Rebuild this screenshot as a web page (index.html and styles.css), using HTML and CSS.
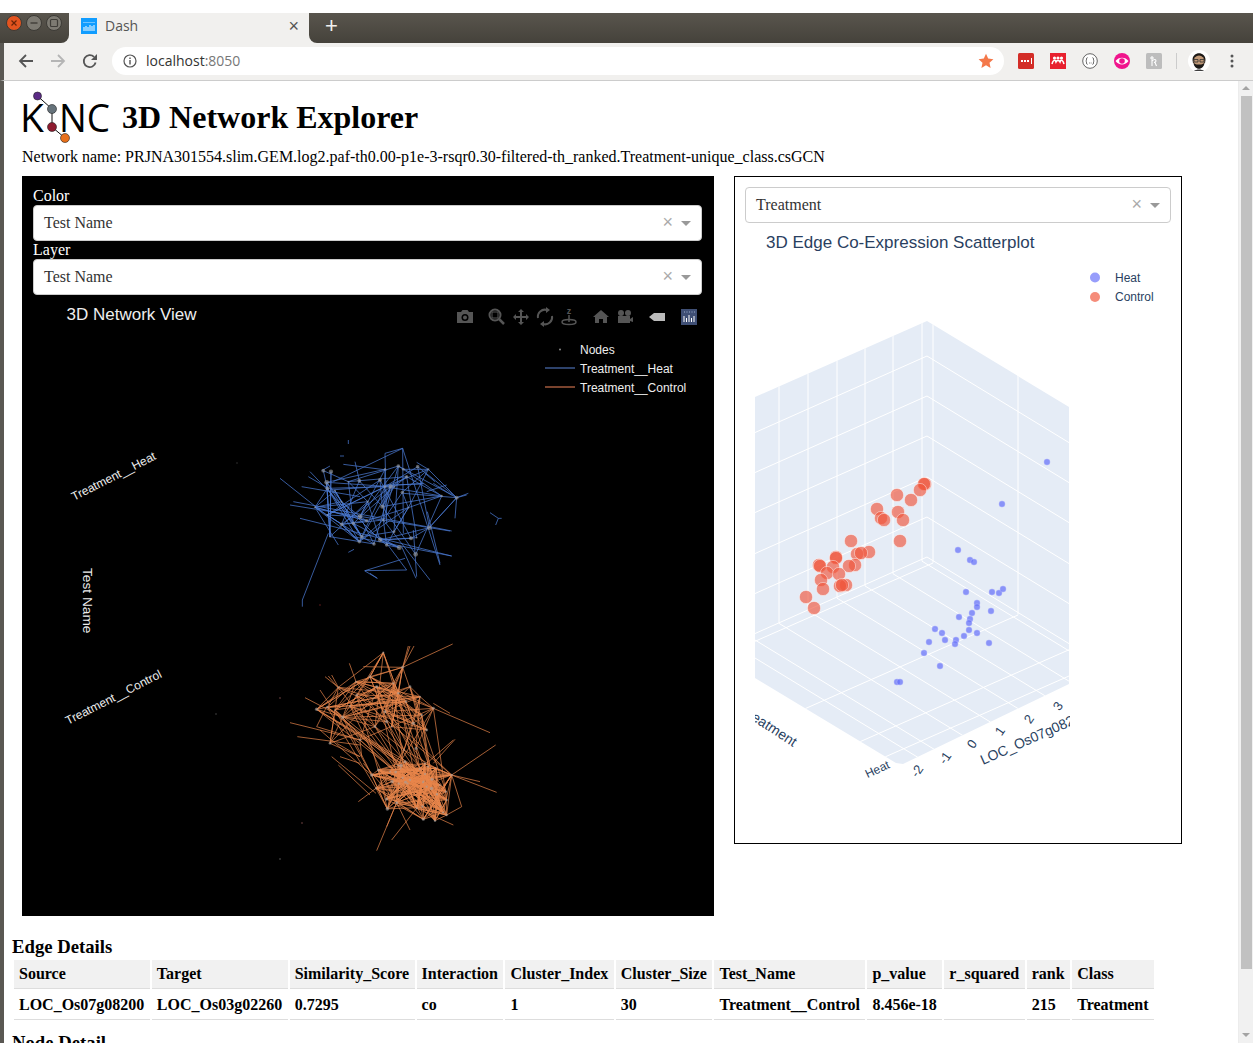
FILE: index.html
```html
<!DOCTYPE html>
<html lang="en">
<head>
<meta charset="utf-8">
<title>Dash</title>
<link rel="stylesheet" href="styles.css">
</head>
<body>
<div class="window">
  <div class="tabstrip">
    <div class="winbtns">
      <svg class="winsvg" viewBox="0 0 69 30" width="69" height="30">
        <circle cx="14" cy="10" r="7.5" fill="#e4541f" stroke="#3c3a35"/>
        <path d="M11.5 7.5l5 5M16.5 7.5l-5 5" stroke="#6b2408" stroke-width="1.2"/>
        <circle cx="34" cy="10" r="7.5" fill="#7d7a72" stroke="#3c3a35"/>
        <path d="M30.5 10h7" stroke="#3f3d38" stroke-width="1.4"/>
        <circle cx="54" cy="10" r="7.5" fill="#7d7a72" stroke="#3c3a35"/>
        <rect x="50.5" y="6.5" width="7" height="7" rx="1" fill="none" stroke="#3f3d38" stroke-width="1.2"/>
      </svg>
    </div>
    <div class="tab">
      <svg class="favicon" viewBox="0 0 16 16" width="16" height="16">
        <rect width="16" height="16" fill="#119dff"/>
        <path d="M3 9v4M5 8v5M7 9v4M9 7v6M11 8v5M13 7v6" stroke="#fff" stroke-width="1"/>
        <path d="M3 4v1M5 4v1M7 4v1M9 4v1M11 4v1M13 4v1" stroke="#cfeaff" stroke-width="1"/>
      </svg>
      <span class="tabtitle">Dash</span>
      <span class="tabclose">×</span>
    </div>
    <div class="stripfill"><span class="newtab">+</span></div>
  </div>
  <div class="toolbar">
    <svg class="navicon" viewBox="0 0 16 16" width="16" height="16"><path d="M15 8H2.5M8 2L2 8l6 6" fill="none" stroke="#555" stroke-width="1.8"/></svg>
    <svg class="navicon" viewBox="0 0 16 16" width="16" height="16"><path d="M1 8h12.5M8 2l6 6-6 6" fill="none" stroke="#b5b5b5" stroke-width="1.8"/></svg>
    <svg class="navicon" viewBox="0 0 16 16" width="16" height="16"><path d="M13.6 9.5A6 6 0 1 1 12 3.8" fill="none" stroke="#555" stroke-width="1.8"/><path d="M15 1v6H9z" fill="#555"/></svg>
    <div class="omnibox">
      <svg class="infoicon" viewBox="0 0 14 14" width="14" height="14"><circle cx="7" cy="7" r="6" fill="none" stroke="#555" stroke-width="1.2"/><path d="M7 6v4.5M7 3.6v1.4" stroke="#555" stroke-width="1.4"/></svg>
      <span class="url"><span class="host">localhost</span>:8050</span>
      <svg class="star" viewBox="0 0 16 16" width="16" height="16"><path d="M8 .8l2.2 4.8 5.2.6-3.9 3.5 1.1 5.2L8 12.2l-4.6 2.7 1.1-5.2L.6 6.2l5.2-.6z" fill="#f4784a"/></svg>
    </div>
    <div class="exts">
      <svg viewBox="0 0 16 16" width="16" height="16"><rect width="16" height="16" rx="1.5" fill="#d32d27"/><path d="M3 7h2v2H3zM6 7h2v2H6zM9 7h2v2H9zM13 5h1v6h-1z" fill="#fff"/></svg>
      <svg viewBox="0 0 16 16" width="16" height="16"><rect width="16" height="16" fill="#e8202e"/><circle cx="4.5" cy="5" r="1.6" fill="#fff"/><circle cx="8" cy="5" r="1.6" fill="#fff"/><circle cx="11.5" cy="5" r="1.6" fill="#fff"/><path d="M2 11c1-4 3-5 4-2 1-2 3-2 4 0 1-3 3-2 4 2" fill="none" stroke="#fff" stroke-width="1.6"/></svg>
      <svg viewBox="0 0 16 16" width="16" height="16"><circle cx="8" cy="8" r="7.3" fill="#fff" stroke="#555" stroke-width=".9"/><path d="M5.5 4.5c-1.5 0-.5 3-1.6 3.5 1.1.5.1 3.500 1.600 3.500M10.500 4.500c1.500 0 .5 3 1.600 3.500-1.100.5-.1 3.500-1.600 3.500M7 10h.8M8.700 10h.8" fill="none" stroke="#555" stroke-width=".9"/></svg>
      <svg viewBox="0 0 16 16" width="16" height="16"><circle cx="8" cy="8" r="8" fill="#f0148c"/><path d="M1.500 8c3-4.500 10-4.500 13 0-3 4.500-10 4.500-13 0z" fill="#fff"/><circle cx="8" cy="8" r="2.800" fill="#f0148c"/></svg>
      <svg viewBox="0 0 16 16" width="16" height="16"><rect width="16" height="16" rx="1.500" fill="#bdbdbd"/><path d="M6 3v10M6 8c2-2 4-2 4 0 0 1-2 1.500-2 1.500M9 9.500l1.500 3.500M4 5h4" fill="none" stroke="#fff" stroke-width="1.100"/></svg>
    </div>
    <span class="toolsep"></span>
    <svg class="avatar" viewBox="0 0 22 22" width="22" height="22">
      <circle cx="11" cy="11" r="11" fill="#fff"/>
      <path d="M4.500 10C4.500 1 17.500 1 17.500 10l-.5 3H5z" fill="#1d1a17"/>
      <ellipse cx="11" cy="11.500" rx="5.500" ry="6" fill="#c29a78"/>
      <path d="M5.500 12c0 9 11 9 11 0-1 2-2 2.500-5.500 2.500S6.500 14 5.500 12z" fill="#1d1a17"/>
      <path d="M6 9.500h4V12H6zM12 9.500h4V12h-4z" fill="none" stroke="#333" stroke-width=".8"/>
      <path d="M6 21c2-2 8-2 10 0z" fill="#3d3d3d"/>
    </svg>
    <svg class="dots" viewBox="0 0 4 14" width="4" height="14"><circle cx="2" cy="2" r="1.500" fill="#555"/><circle cx="2" cy="7" r="1.500" fill="#555"/><circle cx="2" cy="12" r="1.500" fill="#555"/></svg>
  </div>

  <div class="viewport">
    <main class="page">
      <header class="brand">
        <svg class="logo" viewBox="20 90 91 53" width="91" height="53">
          <text class="logotext" x="20" y="131">K</text>
          <text class="logotext" x="59" y="131" textLength="51" lengthAdjust="spacingAndGlyphs">NC</text>
          <path d="M37.500 95L52 108V126L65 137" fill="none" stroke="#111" stroke-width="1"/>
          <circle cx="37.500" cy="95" r="4" fill="#5b2a86" stroke="#222" stroke-width=".6"/>
          <circle cx="52" cy="108" r="4.500" fill="#66737b" stroke="#222" stroke-width=".6"/>
          <circle cx="52" cy="126" r="4.500" fill="#8e1b2f" stroke="#222" stroke-width=".6"/>
          <circle cx="65" cy="137" r="4.500" fill="#e8701a" stroke="#222" stroke-width=".6"/>
        </svg>
        <h1 class="title">3D Network Explorer</h1>
      </header>
      <p class="netname">Network name: PRJNA301554.slim.GEM.log2.paf-th0.00-p1e-3-rsqr0.30-filtered-th_ranked.Treatment-unique_class.csGCN</p>

      <section class="panels">
        <div class="netpanel">
          <div class="controls">
            <label class="ctl-label">Color</label>
            <div class="dropdown"><span class="dd-value">Test Name</span><span class="dd-clear">×</span><span class="dd-caret"></span></div>
            <label class="ctl-label">Layer</label>
            <div class="dropdown"><span class="dd-value">Test Name</span><span class="dd-clear">×</span><span class="dd-caret"></span></div>
          </div>
          <svg id="netplot" class="netplot" viewBox="22 295 692 621" width="692" height="621">
            <text class="plot-title dark" x="66.500" y="320">3D Network View</text>
            <g class="modebar">
              <path d="M457 312h4l1.500-2h5l1.500 2h4v11h-16z"/>
              <circle cx="465" cy="317.500" r="3.500" fill="#000"/><circle cx="465" cy="317.500" r="2"/>
              <circle cx="495" cy="315" r="5.500" fill="none" stroke="#555" stroke-width="2"/>
              <rect x="492" y="312" width="6" height="6" fill="none" stroke="#555"/>
              <path d="M499 319l5 5" stroke="#555" stroke-width="2.500"/>
              <path d="M521 309l3 3h-2v4h4v-2l3 3-3 3v-2h-4v4h2l-3 3-3-3h2v-4h-4v2l-3-3 3-3v2h4v-4h-2z"/>
              <path d="M538 318a7 7 0 0 1 9-8M552 316a7 7 0 0 1-9 8" fill="none" stroke="#555" stroke-width="2"/>
              <path d="M546 307l4 3-4 3zM544 321l-4 3 4 3z"/>
              <text class="mb-z" x="569" y="314">z</text>
              <path d="M569 315v7" stroke="#555" stroke-width="1.500"/>
              <ellipse cx="569" cy="322" rx="7" ry="2.500" fill="none" stroke="#555" stroke-width="1.500"/>
              <path d="M601 310l8 7h-2v6h-4v-4h-4v4h-4v-6h-2z"/>
              <circle cx="621" cy="313" r="3"/><circle cx="628" cy="313" r="3"/>
              <path d="M618 316h12v7h-12zM630 319l3-2v5l-3-1z"/>
              <path class="mb-tag" d="M649 317l5-4h11v8h-11z"/>
              <rect x="681" y="309" width="16" height="16" fill="#3f4f75"/>
              <path d="M684 316v6M686.500 318v4M689 315v7M691.500 318v4M694 316v6" stroke="#fff" stroke-width="1"/>
              <path d="M684 312h1M686.500 312h1M689 312h1M691.500 312h1M694 312h1" stroke="#9fb0d0" stroke-width="1"/>
            </g>
            <g class="legend dark">
              <circle cx="560" cy="349.500" r="1" fill="#888"/>
              <text x="580" y="354">Nodes</text>
              <path d="M545 368h30" stroke="#5b84d6"/>
              <text x="580" y="373">Treatment__Heat</text>
              <path d="M545 387h30" stroke="#f2855a"/>
              <text x="580" y="392">Treatment__Control</text>
            </g>
            <g class="axis-labels">
              <text transform="translate(74 501) rotate(-27)">Treatment__Heat</text>
              <text transform="translate(68 725) rotate(-27)">Treatment__Control</text>
              <text class="axis-name" transform="translate(83 568) rotate(90)">Test Name</text>
            </g>
            <g id="net-blue" class="edges-blue"></g>
            <g id="net-orange" class="edges-orange"></g>
            <g id="net-nodes" class="net-nodes"></g>
          </svg>
        </div>

        <div class="scatterpanel">
          <div class="controls-light">
            <div class="dropdown bordered"><span class="dd-value">Treatment</span><span class="dd-clear">×</span><span class="dd-caret"></span></div>
          </div>
          <svg id="scatter" class="scatter" viewBox="735 223 446 620" width="446" height="620">
            <defs>
              <clipPath id="scene-shape"><polygon points="755,397 927,321 1069,407 1069,684 903,764 896,763 755,678"/></clipPath>
              <clipPath id="scene-clip"><rect x="755" y="300" width="315" height="500"/></clipPath>
            </defs>
            <text class="plot-title" x="766" y="248">3D Edge Co-Expression Scatterplot</text>
            <g class="legend light">
              <circle cx="1095" cy="277.500" r="5" fill="#979dfb"/>
              <text x="1115" y="282">Heat</text>
              <circle cx="1095" cy="297" r="5" fill="#f58c7a"/>
              <text x="1115" y="301">Control</text>
            </g>
            <polygon class="pane" points="755,397 927,321 1069,407 1069,684 903,764 896,763 755,678"/>
            <g id="grid" class="grid" clip-path="url(#scene-shape)"></g>
            <g id="points-blue" class="pts-blue"></g>
            <g id="points-orange" class="pts-orange"></g>
            <g class="ticks" clip-path="url(#scene-clip)">
              <text transform="translate(879 773) rotate(-25)">Heat</text>
              <text class="digit" transform="translate(917 771) rotate(-55)">-2</text>
              <text class="digit" transform="translate(945 758) rotate(-55)">-1</text>
              <text class="digit" transform="translate(972 744) rotate(-55)">0</text>
              <text class="digit" transform="translate(1000 731) rotate(-55)">1</text>
              <text class="digit" transform="translate(1029 719) rotate(-55)">2</text>
              <text class="digit" transform="translate(1058 706) rotate(-55)">3</text>
              <text class="axis-t start" transform="translate(983 765) rotate(-24)">LOC_Os07g08200</text>
              <text class="axis-t end" transform="translate(793 747) rotate(33)">Treatment</text>
            </g>
          </svg>
        </div>
      </section>

      <h3 class="section">Edge Details</h3>
      <table class="details">
        <thead>
          <tr><th>Source</th><th>Target</th><th>Similarity_Score</th><th>Interaction</th><th>Cluster_Index</th><th>Cluster_Size</th><th>Test_Name</th><th>p_value</th><th>r_squared</th><th>rank</th><th>Class</th></tr>
        </thead>
        <tbody>
          <tr><td>LOC_Os07g08200</td><td>LOC_Os03g02260</td><td>0.7295</td><td>co</td><td>1</td><td>30</td><td>Treatment__Control</td><td>8.456e-18</td><td></td><td>215</td><td>Treatment</td></tr>
        </tbody>
      </table>
      <h3 class="section node">Node Detail</h3>
    </main>
    <aside class="scrollbar">
      <span class="sb-up"></span>
      <span class="sb-thumb"></span>
      <span class="sb-down"></span>
    </aside>
  </div>
</div>
<script src="plots.js"></script>
</body>
</html>
```

FILE: styles.css
```css
* { box-sizing: border-box; }
html, body { margin: 0; padding: 0; background: #fff; overflow: hidden; }
body { height: 1056px; font-family: "Liberation Serif", "Times New Roman", serif; color: #000; }

.window { width: 1253px; height: 1030px; margin-top: 13px; display: flex; flex-direction: column; overflow: hidden; }

/* browser chrome */
.tabstrip { flex: 0 0 30px; min-height: 0; display: flex; background: #f1f0ee; }
.winbtns { flex: 0 0 69px; background: linear-gradient(#59554d, #45423b); border-bottom-right-radius: 8px; }
.winsvg { display: block; }
.tab { flex: 0 0 240px; display: flex; align-items: center; padding: 0 10px 4px 12px; background: #f1f0ee; }
.favicon { flex: none; }
.tabtitle { flex: 1; margin: 0 0 2px 8px; font: 14px "Open Sans", "Noto Sans", sans-serif; color: #555; }
.tabclose { font: 18px "Liberation Sans", sans-serif; color: #555; }
.stripfill { flex: 1; display: flex; align-items: center; padding: 0 0 5px 16px; background: linear-gradient(#59554d, #45423b); border-bottom-left-radius: 8px; }
.newtab { font: 22px/24px "Liberation Sans", sans-serif; color: #f1f0ee; }

.toolbar { flex: 0 0 38px; display: flex; align-items: center; padding: 0 19px 1px 14px; background: #f1f0ee; border-bottom: 1px solid #ccc; border-left: 4px solid #5a5853; }
.navicon { flex: none; margin-right: 16px; }
.navicon:nth-child(3) { margin-right: 14px; }
.omnibox { flex: 0 0 892px; height: 28px; display: flex; align-items: center; padding: 0 10px 0 11px; background: #fff; border-radius: 14px; }
.infoicon { flex: none; }
.url { flex: 1; margin-left: 9px; padding-bottom: 1px; font: 14px "Open Sans", "Noto Sans", sans-serif; color: #777; }
.host { color: #333; }
.exts { display: flex; gap: 16px; margin-left: 14px; }
.exts svg { display: block; }
.toolsep { width: 1px; height: 16px; margin-left: 14px; background: #ccc; }
.avatar { flex: none; margin-left: 11px; }
.dots { flex: none; margin-left: 20px; }

/* page */
.viewport { flex: 1; min-height: 0; display: flex; border-left: 4px solid #5a5853; }
.page { flex: 1; min-width: 0; overflow: hidden; padding-left: 8px; }

.brand { display: flex; align-items: center; height: 67px; padding: 5px 0 0 8px; }
.logo { display: block; flex: none; overflow: visible; }
.logotext { font-family: "Open Sans", "Noto Sans", sans-serif; font-weight: 400; font-size: 39px; fill: #000; }
.title { margin: 0 0 0 11px; font-size: 32px; font-weight: 700; line-height: 37px; }
.netname { margin: 0 0 10px 10px; font-size: 16px; line-height: 18px; white-space: nowrap; }

.panels { display: flex; align-items: flex-start; gap: 20px; margin-left: 10px; }
.netpanel { flex: 0 0 692px; height: 740px; background: #000; }
.controls { padding: 11px 12px 0 11px; }
.ctl-label { display: block; color: #fff; font-size: 16px; line-height: 18px; }
.dropdown { display: flex; align-items: center; height: 36px; padding: 0 10px; background: #fff; border: 1px solid #ccc; border-radius: 4px; color: #333; font-size: 16px; }
.dd-value { flex: 1; }
.dd-clear { margin: 0 8px 2px 0; font: 18px "Liberation Sans", sans-serif; color: #aaa; line-height: 1; }
.dd-caret { width: 0; height: 0; border-style: solid; border-width: 5px 5px 0; border-color: #999 transparent transparent; }
.netplot, .scatter { display: block; }

.scatterpanel { flex: 0 0 448px; height: 668px; background: #fff; border: 1px solid #000; }
.controls-light { padding: 10px 10px 0; }

/* plot text */
.plot-title { font: 17px "Liberation Sans", Arial, sans-serif; fill: #2a3f5f; }
.plot-title.dark { fill: #eee; }
.legend text { font: 12px "Liberation Sans", Arial, sans-serif; }
.legend.dark text { fill: #eee; }
.legend.light text { fill: #2a3f5f; }
.axis-labels text { font: 12px "Liberation Sans", Arial, sans-serif; fill: #eee; }
.axis-labels .axis-name { font-size: 13.700px; }
.modebar { fill: #555; }
.mb-z { font: 700 9px "Liberation Sans", sans-serif; fill: #555; text-anchor: middle; }
.mb-tag { fill: #bbb; }

.edges-blue line { stroke: #4a78d0; stroke-width: .75; }
.edges-orange line { stroke: #e8854a; stroke-width: .7; }
.net-nodes circle { fill: #a0a0a0; fill-opacity: .6; }

.pane { fill: #e5ecf6; }
.grid line { stroke: #fff; stroke-width: 1; }
.pts-blue circle { fill: #636efa; fill-opacity: .7; stroke: #fff; stroke-opacity: .5; stroke-width: .5; }
.pts-orange circle { fill: #ef553b; fill-opacity: .65; stroke: #fff; stroke-opacity: .55; stroke-width: .8; }
.ticks text { font: 12px "Liberation Sans", Arial, sans-serif; fill: #2a3f5f; text-anchor: middle; }
.ticks .digit { dominant-baseline: central; font-size: 13px; }
.ticks .axis-t { font-size: 14px; }
.ticks .start { text-anchor: start; }
.ticks .end { text-anchor: end; }

/* tables */
.section { margin: 20px 0 1px; font-size: 18.720px; line-height: 21px; font-weight: 700; }
.section.node { margin-top: 10px; }
.details { border-spacing: 2px; border-collapse: separate; }
.details th, .details td { padding: 5px 5.500px 5px 5px; font-size: 16px; line-height: 18px; font-weight: 700; text-align: left; white-space: nowrap; border-bottom: 1px solid #ddd; }
.details th { background: #f1f1f1; }

/* scrollbar */
.scrollbar { flex: 0 0 15px; display: flex; flex-direction: column; align-items: center; background: #f1f1f1; border-left: 1px solid #ececec; padding-top: 5px; }
.sb-up { width: 0; height: 0; border-style: solid; border-width: 0 4px 4px; border-color: transparent transparent #a3a3a3; }
.sb-thumb { width: 11px; height: 873px; margin-top: 6px; background: #c1c1c1; }
.sb-down { width: 0; height: 0; margin-top: 64px; border-style: solid; border-width: 4px 4px 0; border-color: #a3a3a3 transparent transparent; }
```

FILE: plots.js
```js
(function () {
  var NS = "http://www.w3.org/2000/svg";
  function seeded(a) {
    return function () {
      a |= 0; a = a + 0x6D2B79F5 | 0;
      var t = Math.imul(a ^ a >>> 15, 1 | a);
      t = t + Math.imul(t ^ t >>> 7, 61 | t) ^ t;
      return ((t ^ t >>> 14) >>> 0) / 4294967296;
    };
  }
  function el(g, name, attrs) {
    var e = document.createElementNS(NS, name);
    for (var k in attrs) e.setAttribute(k, attrs[k]);
    g.appendChild(e);
  }
  function line(g, a, b) { el(g, "line", { x1: a[0], y1: a[1], x2: b[0], y2: b[1] }); }
  function dist(a, b) { return Math.hypot(a[0] - b[0], a[1] - b[1]); }
  function toPage(list, oy) { return list.map(function (p) { return [270 + p[0] / 3, oy + p[1] / 3]; }); }

  /* ---------- 3D network: blue layer ---------- */
  var blue = document.getElementById("net-blue");
  var orange = document.getElementById("net-orange");
  var nodesG = document.getElementById("net-nodes");
  var rnd = seeded(11);

  var bn = [[170,157],[172,175],[135,232],[172,255],[215,283],[270,260],[340,270],[478,293],[400,118],[330,150],[268,152],[235,155],[345,118],[385,108],[410,140],[443,110],[475,118],[560,203],[515,198],[415,233],[397,187],[345,170],[373,170],[362,170],[437,373],[423,325],[440,323],[372,305],[330,330],[312,342],[275,320],[268,335],[180,320],[250,280],[290,272],[293,215],[337,230],[215,215],[195,182],[388,353],[350,345],[160,122],[183,125]];
  var bnP = toPage(bn, 430);
  bn.forEach(function (p, i) {
    var cands = bn.filter(function (q) { return q !== p && dist(p, q) < 200; });
    var k = i < 7 ? 5 : 2;
    for (var j = 0; j < k; j++) {
      var q = cands[Math.floor(rnd() * cands.length)];
      line(blue, [270 + p[0] / 3, 430 + p[1] / 3], [270 + q[0] / 3, 430 + q[1] / 3]);
    }
  });
  [
    [398,55,190,155],[398,55,510,405],[398,55,400,310],[398,55,345,70],[345,70,350,280],[30,145,175,260],[175,310,97,510],[97,510,97,530],
    [285,422,410,420],[285,422,405,385],[410,420,350,340],[560,203,480,290],[560,203,400,190],[560,203,555,265],[560,203,595,190],[560,203,590,195],
    [480,290,545,303],[90,265,545,378],[60,225,540,303],[70,215,470,290],[660,248,685,265],[685,265,695,265],[685,265,677,285],[235,30,235,42],[210,78,222,78],
    [235,367,252,358],[283,422,322,445],[322,445,300,430],[438,445,395,350],[480,450,340,270],[120,125,240,250],[220,103,350,120],[255,95,270,160],
    [95,170,270,200],[140,240,205,345],[430,300,440,440],[490,160,545,195],[465,130,495,155],[470,185,530,165],[472,245,510,400],[115,140,175,175],[180,108,155,122],
    [440,97,475,118],[345,165,460,162],[180,180,460,160],[250,320,545,378]
  ].forEach(function (e) {
    line(blue, [270 + e[0] / 3, 430 + e[1] / 3], [270 + e[2] / 3, 430 + e[3] / 3]);
  });
  bnP.forEach(function (p) { el(nodesG, "circle", { cx: p[0], cy: p[1], r: 0.8 + rnd() * 1.6 }); });

  /* ---------- 3D network: orange layer ---------- */
  var ou = [[398,112],[408,215],[195,240],[205,172],[218,262],[300,140],[258,155],[385,190],[450,200],[490,235],[470,300],[270,330],[340,68],[140,238],[172,232],[240,228],[310,205],[370,160],[345,245],[315,290],[365,290],[430,280],[402,360],[438,355],[260,195],[180,340],[320,170],[420,170],[350,275],[455,255]];
  var ol = [[545,435],[380,518],[440,535],[420,450],[465,432],[470,470],[325,420],[360,425],[405,395],[530,555],[495,572],[460,568],[318,475],[305,435],[510,465],[530,510]];
  var r2 = seeded(29);
  for (var n = 0; n < 24; n++) ol.push([335 + r2() * 200, 400 + r2() * 175]);
  function pg(p) { return [270 + p[0] / 3, 630 + p[1] / 3]; }
  ou.forEach(function (p, i) {
    var cands = ou.filter(function (q) { return q !== p && dist(p, q) < 260; });
    for (var j = 0; j < (i < 11 ? 6 : 2); j++) line(orange, pg(p), pg(cands[Math.floor(r2() * cands.length)]));
  });
  ol.forEach(function (p, i) {
    for (var j = 0; j < (i < 6 ? 13 : 6); j++) line(orange, pg(p), pg(ol[Math.floor(r2() * ol.length)]));
  });
  for (var m = 0; m < 42; m++) line(orange, pg(ou[Math.floor(r2() * ou.length)]), pg(ol[Math.floor(r2() * ol.length)]));
  [
    [398,112,548,42],[398,112,415,48],[398,112,432,48],[490,235,660,308],[545,435,677,345],[545,435,680,487],[380,518,320,662],[380,518,350,590],
    [440,535,365,630],[60,278,270,330],[82,320,270,345],[140,290,270,330],[105,203,218,262],[185,380,318,490],[555,328,490,400],[470,400,550,330],
    [165,140,205,172],[175,138,210,180],[185,135,205,172],[238,100,258,155],[280,110,398,112],[150,180,180,225],[270,330,275,380],[270,380,200,340],
    [265,515,318,475],[205,405,300,495],[545,435,575,530],[575,530,530,555],[545,435,630,455],[440,535,550,585],[420,600,380,518],[140,290,170,230],
    [490,220,540,250],[340,68,300,140],[420,48,398,112],[210,380,270,400],[180,340,270,380],[280,400,380,518],[150,300,305,435]
  ].forEach(function (e) { line(orange, pg([e[0], e[1]]), pg([e[2], e[3]])); });
  ou.concat(ol).forEach(function (p) {
    var q = pg(p);
    el(nodesG, "circle", { cx: q[0], cy: q[1], r: 0.8 + r2() * 1 });
  });
  [[280,859,"#999"],[302,823,"#c77"],[280,698,"#c77"],[216,714,"#777"],[237,463,"#555"],[320,605,"#a33"]].forEach(function (d) {
    el(nodesG, "circle", { cx: d[0], cy: d[1], r: 0.8, style: "fill:" + d[2] });
  });

  /* ---------- scatter: grid ---------- */
  var grid = document.getElementById("grid");
  var vx = [779, 808, 837, 865, 893, 922];
  vx.forEach(function (x) {
    line(grid, [x, 300], [x, 559 + (927 - x) * 0.435]);
    line(grid, [x, 559 + (927 - x) * 0.435], [x + 400, 559 + (927 - x) * 0.435 + 244]);
  });
  [356, 396, 436, 477, 517, 557].forEach(function (y) {
    line(grid, [927, y], [727, y + 89]);
    line(grid, [927, y], [1127, y + 122]);
  });
  [[933, 563], [1018, 615], [1073, 648], [1069, 676]].forEach(function (s) {
    line(grid, [s[0], s[1]], [s[0] - 400, s[1] + 176]);
  });
  [[755, 640], [755, 658]].forEach(function (s) {
    line(grid, [s[0], s[1]], [s[0] + 300, s[1] + 183]);
  });
  [933, 1018].forEach(function (x) {
    line(grid, [x, 300], [x, 559 + (x - 927) * 0.61]);
  });

  /* ---------- scatter: points ---------- */
  var pb = document.getElementById("points-blue");
  var po = document.getElementById("points-orange");
  [[1047,462],[1002,504],[958,550],[970,560],[974,562],[966,592],[992,592],[999,593],[1003,589],[977,603],[977,607],[991,611],[972,613],[959,617],[970,619],[969,623],[969,630],[977,633],[964,636],[935,629],[942,633],[945,640],[956,640],[955,644],[929,642],[989,643],[924,653],[940,666],[897,682],[900,682]].forEach(function (p) {
    el(pb, "circle", { cx: p[0], cy: p[1], r: 3.2 });
  });
  [[925,484],[924,484],[920,490],[897,495],[911,500],[877,509],[898,512],[881,518],[884,520],[903,520],[900,541],[851,541],[869,552],[857,554],[861,553],[836,557],[836,558],[819,565],[855,565],[849,566],[820,566],[833,567],[827,573],[839,574],[821,580],[846,585],[840,586],[842,585],[823,589],[806,597],[814,608]].forEach(function (p) {
    el(po, "circle", { cx: p[0], cy: p[1], r: 6.6 });
  });
})();
```
